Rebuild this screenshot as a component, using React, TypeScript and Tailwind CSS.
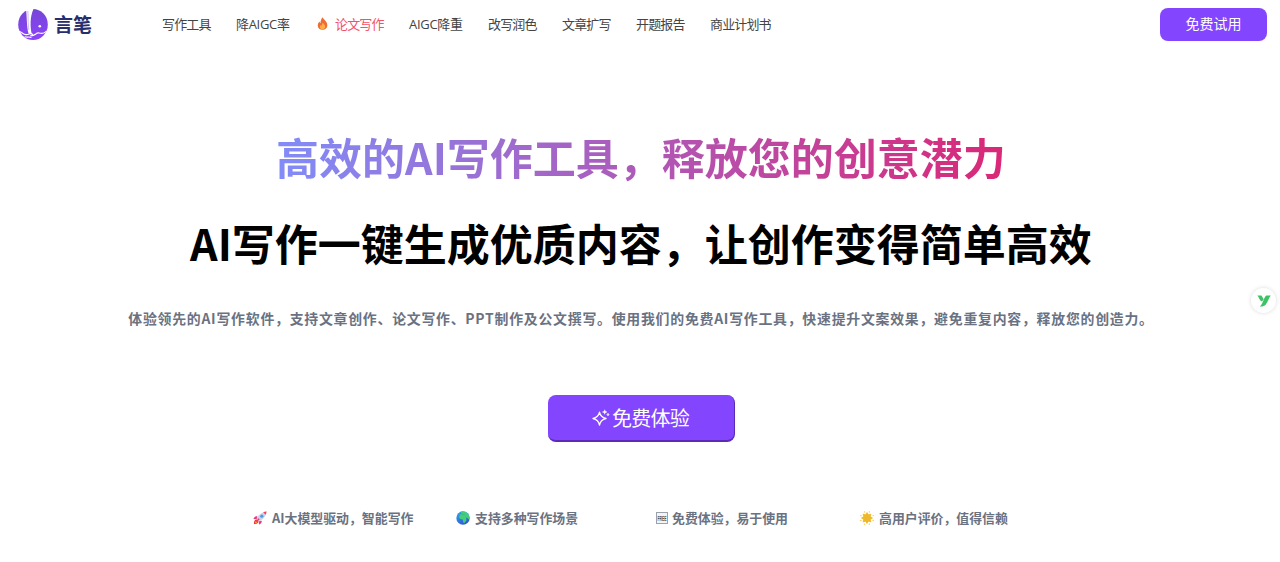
import React from "react";

interface NavItem {
  label: string;
  width: string;
  hot?: boolean;
}

interface Feature {
  icon: React.ReactNode;
  text: string;
  className: string;
}

const navItems: NavItem[] = [
  { label: "写作工具", width: "w-[74px]" },
  { label: "降AIGC率", width: "w-[80px] tracking-[-0.300px]" },
  { label: "论文写作", width: "w-[93px]", hot: true },
  { label: "AIGC降重", width: "w-[79px] tracking-[-0.300px]" },
  { label: "改写润色", width: "w-[74px]" },
  { label: "文章扩写", width: "w-[74px]" },
  { label: "开题报告", width: "w-[74px]" },
  { label: "商业计划书", width: "w-[74px]" },
];

const Logo = () => (
  <svg className="h-8 w-[30px]" viewBox="0 0 30 32">
    <defs>
      <linearGradient id="logo-fill" x1="0" y1="0" x2="0" y2="1">
        <stop offset="0" stopColor="#7546d6" />
        <stop offset="1" stopColor="#8d43fb" />
      </linearGradient>
    </defs>
    <ellipse cx="15" cy="15.500" rx="14.800" ry="15.400" fill="url(#logo-fill)" />
    <path d="M8 0C9 8 8.500 18 10.500 24.500l3.300.7C12.200 18 11.800 8 15.500 0z" fill="#fff" />
    <path d="M9.800 2C10.500 9 9.500 15 11 21" fill="none" stroke="#d6c4ff" strokeWidth="1.200" />
    <path d="M1.500 22.500c2.500 1 4 3 6.500 3.200 3 .3 4-1.700 5.800-.9 1.300.8.3 2.200-1 1.700M14 26.500c3 .5 4-3 7-2.500 2.500.5 5 1 7-1.500M7 27.800c2 .6 3.500-.2 6 .6" fill="none" stroke="#fff" strokeWidth="1.200" strokeLinecap="round" />
    <circle cx="21.800" cy="17.300" r="1.300" fill="#fff" />
  </svg>
);

const FireIcon = () => (
  <svg className="h-[13px] w-[13px]" viewBox="0 0 14 14">
    <path d="M7.200.3c.4 2.100 5 4.300 5 8.600 0 3-2.200 4.900-5.100 4.900S1.900 12 1.900 9.100c0-2 1.100-3.300 1.900-4.200.1 1 .5 1.500 1 1.700C5 4 5.700 1.600 7.200.3z" fill="#ee6d32" />
    <path d="M7.600 6.300c.2 1.600 2.300 2.200 2.300 4.200 0 1.700-1.300 2.700-2.800 2.700s-2.800-.9-2.800-2.500c0-1 .6-1.700 1-2.100.2.600.5.800.9.900 0-1.300.4-2.400 1.400-3.200z" fill="#ffad48" />
  </svg>
);

const RocketIcon = () => (
  <svg className="h-3.5 w-3.5" viewBox="0 0 14 14">
    <path d="M1 13c-.3-3 1-4.700 3-4.500l1.500 1.500C5.700 12 4 13.300 1 13z" fill="#f8312f" />
    <path d="M2 12c.1-1.500.8-2.500 1.800-2.300l.6.700C4.500 11.500 3.500 12 2 12z" fill="#ffb02e" />
    <path d="M4.300 5.300C2.500 5 1.200 6 .5 8l3.300.3zM8.700 9.700c.3 1.800-.7 3.100-2.700 3.800l-.3-3.300z" fill="#f0367c" />
    <path d="M3.500 8.300C4.800 4.500 8.500 1 13.500.5 13.200 5.300 9.500 9.200 5.700 10.500z" fill="#cdd3e2" />
    <path d="M10.200 1.300C11.300.8 12.300.6 13.500.5c-.1 1.200-.4 2.300-.8 3.300z" fill="#f8405c" />
    <circle cx="8.800" cy="5.200" r="1.600" fill="#4b9bed" />
    <path d="M3.200 10.800l3-3" stroke="#f0367c" strokeWidth="1.300" />
  </svg>
);

const GlobeIcon = () => (
  <svg className="h-3.5 w-3.5" viewBox="0 0 14 14">
    <defs>
      <linearGradient id="sea" x1="0" y1="0" x2="0.600" y2="1">
        <stop offset="0" stopColor="#2daaf0" />
        <stop offset="1" stopColor="#3157d5" />
      </linearGradient>
    </defs>
    <circle cx="7" cy="7" r="6.700" fill="url(#sea)" />
    <path d="M4.500.8C7 .1 10 .6 12 2.700c1 1.300 1.600 2.800 1.500 4.200l-1.300 1.500-.7-1.600-1.300.2.200 2.400-2 2.600-1.200-.4-.4-3.200-2.500-.3L3 6.200l1-2.700 1.700-.7z" fill="#44ce77" />
    <path d="M5.500 3.300l2 .3 1.500-.5M9.500 5.500l1.200 1.400" fill="none" stroke="#2fb190" strokeWidth=".6" />
  </svg>
);

const FreeIcon = () => (
  <svg className="h-3 w-3" viewBox="0 0 12 12">
    <rect x=".5" y=".5" width="11" height="11" fill="#f3f4f6" stroke="#9ba2ac" />
    <text transform="translate(6 8.800) scale(1 2.300)" textAnchor="middle" fontSize="3.400" className="fill-gray-600 font-['Liberation_Sans']">
      FREE
    </text>
  </svg>
);

const SunIcon = () => (
  <svg className="h-3.5 w-3.5" viewBox="0 0 14 14">
    <path d="M7 1.600l1.400 2.200 2.500-.7-.6 2.500L12.500 7l-2.200 1.400.6 2.500-2.500-.7L7 12.400l-1.400-2.200-2.500.7.6-2.500L1.500 7l2.200-1.400-.6-2.500 2.500.7z" fill="#efb82a" stroke="#efb82a" strokeWidth=".8" strokeLinejoin="round" />
    <path d="M4.600.8v.1M9.400.8v.1M4.600 13.100v.1M9.400 13.100v.1M.8 4.600h.1M.8 9.400h.1M13.100 4.600h.1M13.100 9.400h.1" stroke="#f8c72c" strokeWidth="1.300" strokeLinecap="round" />
  </svg>
);

const SparkleIcon = () => (
  <svg className="h-[18px] w-[18px]" viewBox="0 0 18 18" fill="none" stroke="currentColor" strokeWidth="1.300" strokeLinejoin="round">
    <path d="M7.500 3.200c.8 4 2.500 5.500 6.500 6.300-4 .8-5.700 2.400-6.500 6.700-.8-4.300-2.500-5.900-6.500-6.700 4-.8 5.700-2.300 6.500-6.300z" />
    <path d="M12.700.8c.2 1.400.8 2 2.200 2.200-1.400.2-2 .8-2.200 2.200-.2-1.400-.8-2-2.200-2.200 1.400-.2 2-.8 2.200-2.200zM16 4.300c.1.800.5 1.200 1.300 1.300-.8.1-1.200.5-1.300 1.300-.1-.8-.5-1.200-1.300-1.300.8-.1 1.200-.5 1.300-1.300z" fill="currentColor" strokeWidth=".6" />
  </svg>
);

const features: Feature[] = [
  { icon: <RocketIcon />, text: "AI大模型驱动，智能写作", className: "w-[203px] gap-[5px]" },
  { icon: <GlobeIcon />, text: "支持多种写作场景", className: "w-[200px] gap-[5px]" },
  { icon: <FreeIcon />, text: "免费体验，易于使用", className: "w-[204px] gap-[4px]" },
  { icon: <SunIcon />, text: "高用户评价，值得信赖", className: "gap-[5px]" },
];

const Navbar = () => (
  <header className="flex h-[49px] items-center pr-[13px] pl-[18px]">
    <a className="flex w-[144px] items-center">
      <Logo />
      <span className="mb-px ml-1.5 text-[19px] leading-8 font-bold text-[#272d6d]">言笔</span>
    </a>
    <nav className="mb-0.5 flex items-center font-['Open_Sans','Noto_Sans_CJK_SC',sans-serif] text-[13px] leading-6 tracking-[-0.850px] whitespace-nowrap text-[#444]">
      {navItems.map((item) => (
        <a key={item.label} className={`flex items-center ${item.width}`}>
          {item.hot ? (
            <>
              <FireIcon />
              <span className="ml-1.5 text-[#f4516c]">{item.label}</span>
            </>
          ) : (
            item.label
          )}
        </a>
      ))}
    </nav>
    <button className="ml-auto h-[33px] w-[107px] rounded-lg bg-[#8445ff] pb-0.5 text-[14px] text-white">免费试用</button>
  </header>
);

const Hero = () => (
  <main className="flex flex-col items-center pl-0.5 whitespace-nowrap">
    <h1 className="mt-16 bg-linear-to-r/srgb from-[#818cf8] to-[#db2777] bg-clip-text text-[43px] leading-[86px] font-bold text-transparent">
      高效的AI写作工具，释放您的创意潜力
    </h1>
    <h2 className="text-[43px] leading-[86px] font-bold text-black">AI写作一键生成优质内容，让创作变得简单高效</h2>
    <p className="mt-[21px] text-[13.900px] leading-6 font-bold tracking-[0.750px] text-gray-500">
      体验领先的AI写作软件，支持文章创作、论文写作、PPT制作及公文撰写。使用我们的免费AI写作工具，快速提升文案效果，避免重复内容，释放您的创造力。
    </p>
    <button className="mt-[65px] flex h-[47px] w-[187px] items-center justify-center gap-0.5 rounded-lg border-r border-b-2 border-[#5b2bb8] bg-[#8445ff] text-[20px] tracking-[-0.800px] text-white">
      <SparkleIcon />
      <span>免费体验</span>
    </button>
    <div className="mt-16 mr-0.5 flex w-[774px] text-[12.900px] leading-6 font-bold text-gray-500">
      {features.map((feature) => (
        <div key={feature.text} className={`flex items-center ${feature.className}`}>
          {feature.icon}
          <span>{feature.text}</span>
        </div>
      ))}
    </div>
  </main>
);

const FloatingBadge = () => (
  <div className="fixed top-[288px] right-1 flex h-[25px] w-[25px] items-center justify-center rounded-full bg-white shadow-[0_0_4px_rgba(0,0,0,0.150)]">
    <svg className="h-[12px] w-[14px]" viewBox="0 0 14 12" fill="#3fc267">
      <path d="M.3.500h4.200l2.200 3.800-1.800 2.200C2.500 5.700 2.300 2.500.3.500z" />
      <path d="M9.300.500h4.500C11.500 3.500 10.800 7.200 8.800 9.500 7.400 11.200 5.600 11.600 2.700 11.500 6 9.500 6.300 3 9.300.500z" />
    </svg>
  </div>
);

export default function App() {
  return (
    <div className="h-[562px] overflow-hidden bg-white font-['Noto_Sans_CJK_SC',sans-serif]">
      <Navbar />
      <Hero />
      <FloatingBadge />
    </div>
  );
}
